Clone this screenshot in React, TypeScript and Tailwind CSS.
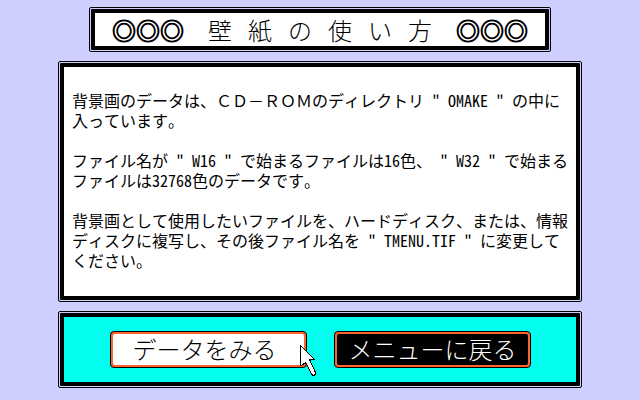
import type { ReactNode } from 'react';

function Frame({ children, className = '' }: { children: ReactNode; className?: string }) {
  return (
    <div className="rounded-[2px] border border-black p-px">
      <div className={`rounded-[1px] border-4 border-black ${className}`}>{children}</div>
    </div>
  );
}

function Rings() {
  return <span className="[-webkit-text-stroke:1px_black]">◎◎◎</span>;
}

function Pointer() {
  return (
    <svg
      className="pointer-events-none absolute left-[190px] top-[14px]"
      width="18"
      height="33"
      viewBox="0 0 18 33"
      shapeRendering="crispEdges"
      aria-hidden="true"
    >
      <path
        d="M0.5 0.5 L14.5 14.5 H9.5 L15.5 27.5 V29.5 L13.5 30.5 H12.5 L5.5 17.5 L1.5 20.5 H0.5 Z"
        fill="#fff"
        stroke="#000"
        strokeWidth="1"
      />
    </svg>
  );
}

const title = ['壁', '紙', 'の', '使', 'い', '方'];

const paragraphs: ReactNode[][] = [
  [
    <>
      背景画のデータは、<span className="[font-feature-settings:normal]">ＣＤ－ＲＯＭ</span>のディレクトリ " OMAKE " の中に
    </>,
    '入っています。',
  ],
  ['ファイル名が " W16 " で始まるファイルは16色、 " W32 " で始まる', 'ファイルは32768色のデータです。'],
  [
    '背景画として使用したいファイルを、ハードディスク、または、情報',
    'ディスクに複写し、その後ファイル名を " TMENU.TIF " に変更して',
    'ください。',
  ],
];

const buttonBase =
  'h-[37px] w-[197px] rounded-[4px] border border-black bg-[#ff6531] p-[2px] text-[24px] leading-[29px] font-light';

export default function App() {
  return (
    <main className="flex min-h-screen flex-col gap-[9px] bg-[#ceceff] px-[58px] pt-[7px] pb-3 font-['Noto_Sans_CJK_JP',sans-serif] text-black [font-kerning:none]">
      <header className="flex justify-center">
        <Frame className="bg-white px-[17px]">
          <h1 className="flex gap-6 text-[24px] leading-[33px] font-light whitespace-nowrap">
            <Rings />
            <span className="flex gap-4">
              {title.map((c) => (
                <span key={c}>{c}</span>
              ))}
            </span>
            <Rings />
          </h1>
        </Frame>
      </header>

      <Frame className="bg-white pt-[23px] pr-1 pb-[26px] pl-2">
        <div className="flex flex-col gap-5 text-[16px] leading-5 [font-feature-settings:'hwid']">
          {paragraphs.map((lines, p) => (
            <p key={p}>
              {lines.map((line, i) => (
                <span key={i} className="block whitespace-nowrap">
                  {line}
                </span>
              ))}
            </p>
          ))}
        </div>
      </Frame>

      <Frame className="bg-[#00ffef]">
        <div className="flex justify-center gap-[27px] py-[14px] pl-px">
          <div className="relative">
            <button type="button" className={buttonBase}>
              <span className="block rounded-[2px] bg-white pr-2 pb-[2px]">データをみる</span>
            </button>
            <Pointer />
          </div>
          <button type="button" className={buttonBase}>
            <span className="block rounded-[2px] bg-black pb-[2px] text-white">メニューに戻る</span>
          </button>
        </div>
      </Frame>
    </main>
  );
}
